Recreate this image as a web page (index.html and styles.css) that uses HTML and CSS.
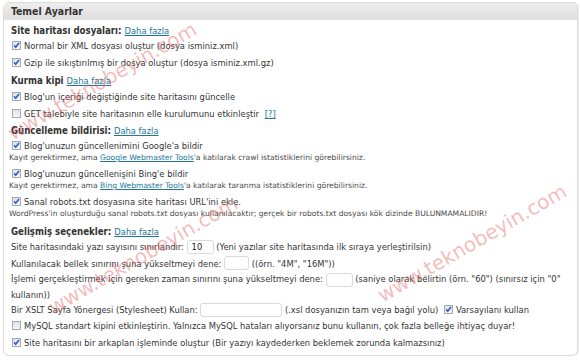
FILE: index.html
```html
<!DOCTYPE html>
<html lang="tr">
<head>
<meta charset="utf-8">
<title>Temel Ayarlar</title>
<link rel="stylesheet" href="styles.css">
</head>
<body>
<div class="page">
  <div class="panel">
    <div class="hd">Temel Ayarlar</div>
    <div class="bd">
      <div class="h h1">Site haritası dosyaları: <a href="#">Daha fazla</a></div>
      <div class="r r17"><span class="cb on"><svg viewBox="0 0 9 9"><path d="M2 4.3 L3.7 6.3 L7 2"/></svg></span>Normal bir XML dosyası oluştur (dosya isminiz.xml)</div>
      <div class="r r17"><span class="cb on"><svg viewBox="0 0 9 9"><path d="M2 4.3 L3.7 6.3 L7 2"/></svg></span>Gzip ile sıkıştırılmış bir dosya oluştur (dosya isminiz.xml.gz)</div>

      <div class="h h2">Kurma kipi <a href="#">Daha fazla</a></div>
      <div class="r r17"><span class="cb on"><svg viewBox="0 0 9 9"><path d="M2 4.3 L3.7 6.3 L7 2"/></svg></span>Blog'un içeriği değiştiğinde site haritasını güncelle</div>
      <div class="r r17"><span class="cb"></span>GET talebiyle site haritasının elle kurulumunu etkinleştir <a href="#" class="q">[?]</a></div>

      <div class="h h3">Güncelleme bildirisi: <a href="#">Daha fazla</a></div>
      <div class="r r14"><span class="cb on"><svg viewBox="0 0 9 9"><path d="M2 4.3 L3.7 6.3 L7 2"/></svg></span>Blog'unuzun güncellenimini Google'a bildir</div>
      <div class="s s11">Kayıt gerektirmez, ama <a href="#">Google Webmaster Tools</a>'a katılarak crawl istatistiklerini görebilirsiniz.</div>
      <div class="r r16 mt2"><span class="cb on"><svg viewBox="0 0 9 9"><path d="M2 4.3 L3.7 6.3 L7 2"/></svg></span>Blog'unuzun güncellenişini Bing'e bildir</div>
      <div class="s s10">Kayıt gerektirmez, ama <a href="#">Bing Webmaster Tools</a>'a katılarak taranma istatistiklerini görebilirsiniz.</div>
      <div class="r r16 mt2"><span class="cb on"><svg viewBox="0 0 9 9"><path d="M2 4.3 L3.7 6.3 L7 2"/></svg></span>Sanal robots.txt dosyasına site haritası URL'ini ekle.</div>
      <div class="s s10">WordPress'in oluşturduğu sanal robots.txt dosyası kullanılacaktır; gerçek bir robots.txt dosyası kök dizinde BULUNMAMALIDIR!</div>

      <div class="h h4">Gelişmiş seçenekler: <a href="#">Daha fazla</a></div>
      <div class="r r17 plain">Site haritasındaki yazı sayısını sınırlandır: <span class="in w27">10</span> (Yeni yazılar site haritasında ilk sıraya yerleştirilsin)</div>
      <div class="r r16 plain">Kullanılacak bellek sınırını şuna yükseltmeyi dene: <span class="in w25"></span> ((örn. "4M", "16M"))</div>
      <div class="r wrap plain">İşlemi gerçekleştirmek için gereken zaman sınırını şuna yükseltmeyi dene: <span class="in w27"></span> (saniye olarak belirtin (örn. "60") (sınırsız için "0" kullanın))</div>
      <div class="r r16 plain">Bir XSLT Sayfa Yönergesi (Stylesheet) Kullan: <span class="in w82"></span> (.xsl dosyanızın tam veya bağıl yolu) <span class="cb on"><svg viewBox="0 0 9 9"><path d="M2 4.3 L3.7 6.3 L7 2"/></svg></span>Varsayılanı kullan</div>
      <div class="r r16"><span class="cb"></span>MySQL standart kipini etkinleştirin. Yalnızca MySQL hataları alıyorsanız bunu kullanın, çok fazla belleğe ihtiyaç duyar!</div>
      <div class="r r17"><span class="cb on"><svg viewBox="0 0 9 9"><path d="M2 4.3 L3.7 6.3 L7 2"/></svg></span>Site haritasını bir arkaplan işleminde oluştur (Bir yazıyı kaydederken beklemek zorunda kalmazsınız)</div>
    </div>
  </div>
  <span class="wm wm1">www.teknobeyin.com</span>
  <span class="wm wm2">www.teknobeyin.com</span>
  <span class="wm wm3">www.teknobeyin.com</span>
</div>
</body>
</html>
```

FILE: styles.css
```css
html, body {
  margin: 0;
  padding: 0;
  background: #ffffff;
}

.page {
  position: relative;
  width: 580px;
  height: 360px;
  overflow: hidden;
  padding-top: 2px;
  box-sizing: border-box;
  font-family: "DejaVu Sans Condensed", "DejaVu Sans", sans-serif;
  color: #333333;
}

.panel {
  margin-left: 3px;
  width: 575px;
  box-sizing: border-box;
  border: 1px solid #dcdcdc;
  border-radius: 6px;
  box-shadow: 1px 0 0 #ececec;
  overflow: hidden;
  background: #ffffff;
}

.hd {
  height: 16px;
  line-height: 16px;
  padding-left: 7px;
  font-size: 10.4px;
  font-weight: bold;
  color: #333333;
  background: linear-gradient(#eeeeee, #dedede);
  border-bottom: 1px solid #e4e4e4;
}

.bd {
  padding: 4px 8px 4px 7px;
  display: flex;
  flex-direction: column;
  font-size: 9.3px;
}

a {
  color: #21759b;
  text-decoration: underline;
}

.h {
  font-weight: bold;
  font-size: 9.6px;
  height: 13px;
  line-height: 13px;
  white-space: nowrap;
}
.h a { font-weight: normal; font-size: 9.3px; }
.h2 { margin-top: 3px; height: 14px; line-height: 14px; }
.h3 { margin-top: 2px; height: 14px; line-height: 14px; }
.h4 { margin-top: 6px; }

.r {
  display: flex;
  align-items: center;
  white-space: pre;
}
.r17 { height: 17px; }
.r16 { height: 16px; }
.r14 { height: 14px; }
.mt2 { margin-top: 2px; }

.r .q { margin-left: 3px; }

.wrap {
  display: block;
  white-space: normal;
  line-height: 15px;
  width: 562px;
}

.s {
  font-family: "DejaVu Sans", sans-serif;
  font-size: 7.6px;
  color: #4a4a4a;
  white-space: nowrap;
  margin-left: -2px;
}
.s11 { height: 11px; line-height: 11px; }
.s10 { height: 10px; line-height: 10px; }

.cb {
  display: inline-block;
  flex: none;
  width: 9px;
  height: 9px;
  box-sizing: border-box;
  border: 1px solid #a2aab3;
  background: linear-gradient(#dde2e8, #f6f7f8);
  margin-left: 1px;
  margin-right: 3px;
  position: relative;
}
.cb svg {
  position: absolute;
  left: -1px;
  top: -1px;
  width: 9px;
  height: 9px;
}
.cb svg path {
  fill: none;
  stroke: #2a5bbf;
  stroke-width: 1.5;
}
.plain .cb { margin-left: 3px; }

.in {
  display: inline-block;
  flex: none;
  height: 14px;
  line-height: 12px;
  box-sizing: border-box;
  border: 1px solid #dadada;
  border-radius: 3px;
  background: #ffffff;
  padding-left: 4px;
  color: #222222;
  vertical-align: middle;
}
.w27 { width: 27px; }
.w25 { width: 25px; }
.w82 { width: 82px; }

.wm {
  position: absolute;
  font-family: "DejaVu Sans", sans-serif;
  font-size: 20px;
  color: rgba(232, 90, 90, 0.42);
  white-space: nowrap;
  transform: translate(-50%, -50%) rotate(-30deg);
  pointer-events: none;
}
.wm1 { left: 102px; top: 81px; }
.wm2 { left: 143px; top: 255px; }
.wm3 { left: 472px; top: 243px; }
```
